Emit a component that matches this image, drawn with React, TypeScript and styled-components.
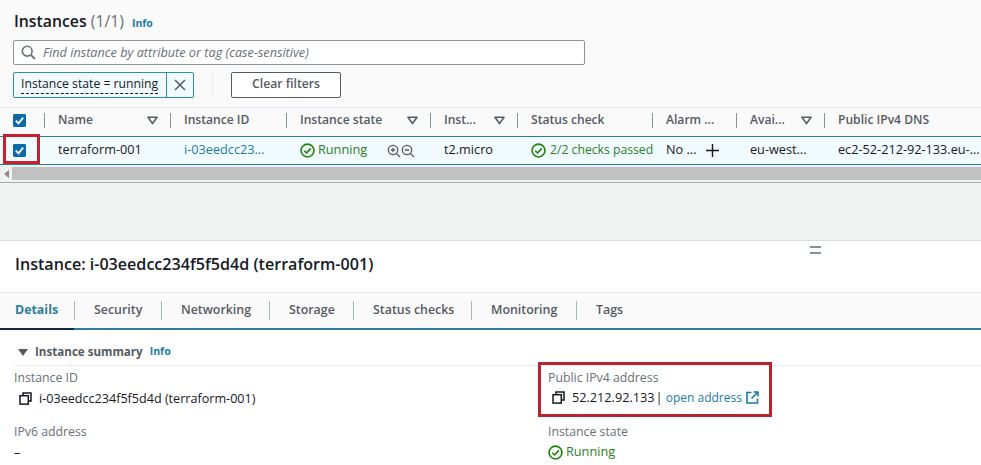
import React from "react";
import styled, { createGlobalStyle } from "styled-components";

const Global = createGlobalStyle`
  html, body { margin: 0; padding: 0; background: #fff; }
  * { box-sizing: border-box; }
  body { font-family: "Open Sans", "Noto Sans", sans-serif; color: #16191f; }
`;

const Page = styled.div`
  width: 981px;
  height: 465px;
  overflow: hidden;
  display: flex;
  flex-direction: column;
  background: #fff;
`;

const TopPanel = styled.section`
  height: 241px;
  flex: none;
  background: #f2f3f3;
  border-bottom: 1px solid #d5dbdb;
`;

const ListHead = styled.div`
  height: 108px;
  background: #fafafa;
  border-bottom: 1px solid #eaeded;
  padding: 11px 0 0 14px;
`;

const TitleRow = styled.div`
  display: flex;
  align-items: baseline;
  gap: 8px;
  height: 29px;
`;

const Title = styled.h1`
  margin: 0;
  font-size: 15.8px;
  font-weight: 600;
  line-height: 20px;
  color: #16191f;
`;

const Count = styled.span`
  font-weight: 400;
  color: #687078;
`;

const InfoLink = styled.a`
  font-size: 10.5px;
  font-weight: 700;
  color: #1a7aa8;
`;

const Search = styled.div`
  width: 572px;
  height: 25px;
  margin-left: -1px;
  background: #fff;
  border: 1px solid #8d9596;
  border-radius: 2px;
  display: flex;
  align-items: center;
  gap: 7px;
  padding: 0 0 1px 7px;
  font-size: 12.7px;
  font-style: italic;
  color: #687078;
`;

const FilterRow = styled.div`
  display: flex;
  align-items: stretch;
  height: 26px;
  margin: 7px 0 0 -1px;
`;

const Token = styled.div`
  width: 181px;
  display: flex;
  background: #f1faff;
  border: 1px solid #2b8fa8;
  border-radius: 2px;
`;

const TokenLabel = styled.span`
  flex: 1;
  padding-left: 7px;
  font-size: 12.2px;
  line-height: 22px;
  color: #16191f;
  white-space: nowrap;
  overflow: hidden;

  & > span {
    border-bottom: 1px dashed #16191f;
    padding-bottom: 1px;
  }
`;

const TokenClose = styled.span`
  width: 27px;
  flex: none;
  display: flex;
  align-items: center;
  justify-content: center;
  border-left: 1px solid #2b8fa8;
  color: #545b64;
`;

const FilterDivider = styled.span`
  width: 1px;
  margin: 0 18px 0 18px;
  background: #eaeded;
`;

const ClearButton = styled.div`
  width: 110px;
  background: #fff;
  border: 1px solid #545b64;
  border-radius: 2px;
  text-align: center;
  font-size: 12.2px;
  font-weight: 600;
  line-height: 22px;
  color: #545b64;
`;

const columns = "44px 126px 116px 144px 87px 135px 84px 88px 157px";

const HeadRow = styled.div`
  display: grid;
  grid-template-columns: ${columns};
  height: 28px;
  background: #fafafa;
`;

const HeadCell = styled.div<{ $first?: boolean }>`
  position: relative;
  display: flex;
  align-items: center;
  justify-content: space-between;
  padding: 0 ${(p) => (p.$first ? "0" : "12px")} 3px ${(p) => (p.$first ? "13px" : "14px")};
  font-size: 12.1px;
  font-weight: 600;
  color: #545b64;
  white-space: nowrap;

  &::before {
    content: "";
    display: ${(p) => (p.$first ? "none" : "block")};
    position: absolute;
    left: 0;
    top: 5px;
    bottom: 8px;
    width: 1px;
    background: #879596;
  }
`;

const HeadLabel = styled.span`
  margin-bottom: 2px;
`;

const DataRow = styled.div`
  display: grid;
  grid-template-columns: ${columns};
  height: 29px;
  background: #f1faff;
  border-top: 1px solid #2a7d9c;
  border-bottom: 1px solid #2a7d9c;
`;

const DataCell = styled.div`
  position: relative;
  display: flex;
  align-items: center;
  padding-left: 14px;
  font-size: 12.7px;
  color: #16191f;
  white-space: nowrap;
`;

const CheckCell = styled(DataCell)`
  padding-left: 13px;
`;

const RedFrame = styled.span`
  position: absolute;
  left: 3px;
  top: -3px;
  width: 37px;
  height: 30px;
  border: 3px solid #c8202d;
`;

const LinkText = styled.span`
  color: #1a7aa8;
  margin-bottom: 4px;
`;

const Plain = styled.span`
  margin-bottom: 4px;
`;

const Success = styled.span<{ $gap?: number; $size?: number }>`
  display: inline-flex;
  align-items: center;
  gap: ${(p) => p.$gap ?? 3}px;
  font-size: ${(p) => p.$size ?? 12.7}px;
  color: #2b7f1e;

  & > span {
    margin-bottom: 3px;
  }
`;

const ZoomIcons = styled.span`
  display: inline-flex;
  margin-left: 20px;
  color: #545b64;
`;

const AlarmPlus = styled.span`
  display: inline-flex;
  margin-left: 10px;
  color: #16191f;
`;

const ScrollTrack = styled.div`
  height: 18px;
  background: #f1f1f1;
  border-bottom: 1px solid #a9a9a9;
  display: flex;
  align-items: flex-start;
  padding-top: 2px;
`;

const ScrollArrow = styled.span`
  width: 12px;
  height: 13px;
  flex: none;
  display: flex;
  align-items: center;
  justify-content: center;
  color: #8a8a8a;
  font-size: 0;
`;

const ScrollThumb = styled.span`
  flex: 1;
  height: 13px;
  background: #c1c1c1;
`;

const DragHandle = styled.div`
  position: relative;
  height: 0;
  flex: none;

  &::after {
    content: "";
    box-sizing: border-box;
    position: absolute;
    left: 810px;
    top: 5px;
    width: 11px;
    height: 8px;
    border-top: 2px solid #8a9090;
    border-bottom: 2px solid #8a9090;
  }
`;

const DetailTitle = styled.h2`
  margin: 0;
  height: 51px;
  flex: none;
  padding: 13px 0 0 15px;
  font-size: 16.1px;
  font-weight: 600;
  line-height: 20px;
  color: #16191f;
`;

const TabBar = styled.nav`
  height: 38px;
  flex: none;
  display: flex;
  background: #fafafa;
  border-top: 1px solid #eaeded;
  border-bottom: 2px solid #2a7d9c;
  position: relative;
`;

const Tab = styled.div<{ $active?: boolean; $w: number }>`
  position: relative;
  width: ${(p) => p.$w}px;
  flex: none;
  margin-bottom: -2px;
  padding: 8px 0 0 ${(p) => (p.$active ? "15px" : "20px")};
  font-size: 12.4px;
  font-weight: ${(p) => (p.$active ? 700 : 600)};
  color: ${(p) => (p.$active ? "#2a7d9c" : "#545b64")};
  border-bottom: 2px solid ${(p) => (p.$active ? "#0e2a3c" : "transparent")};
  white-space: nowrap;

  &:not(:first-child)::before {
    content: "";
    position: absolute;
    left: 0;
    top: 8px;
    height: 19px;
    width: 1px;
    background: #aab7b8;
  }
`;

const SummaryHead = styled.div`
  height: 36px;
  flex: none;
  margin: 0 0 0 14px;
  padding: 12px 0 0 4px;
  display: flex;
  align-items: flex-start;
  gap: 7px;
  border-bottom: 1px solid #eaeded;
`;

const SummaryTitle = styled.span`
  font-size: 11.6px;
  font-weight: 700;
  line-height: 21px;
  color: #545b64;
  margin-top: -1px;
`;

const SummaryInfo = styled(InfoLink)`
  line-height: 21px;
  margin-top: -1px;
`;

const Caret = styled.span`
  margin-top: 7px;
  width: 0;
  height: 0;
  border-left: 5px solid transparent;
  border-right: 5px solid transparent;
  border-top: 7px solid #545b64;
`;

const Fields = styled.div`
  display: grid;
  flex: none;
  grid-template-columns: 524px 234px;
  margin-left: 14px;
`;

const FieldColumn = styled.div`
  display: flex;
  flex-direction: column;
`;

const Field = styled.div`
  height: 54px;
  flex: none;
  padding-top: 3px;
`;

const FramedField = styled(Field)`
  margin-top: -4px;
  height: 55px;
  padding: 4px 0 0 7px;
  border: 3px solid #b82330;
`;

const LastField = styled(Field)`
  padding: 6px 0 0 10px;
`;

const FieldLabel = styled.div`
  font-size: 12.3px;
  line-height: 18px;
  color: #687078;
`;

const FieldValue = styled.div`
  display: flex;
  align-items: center;
  height: 20px;
  margin-top: 1px;
  font-size: 12.6px;
  color: #16191f;
  white-space: nowrap;
`;

const FramedValue = styled(FieldValue)`
  margin-top: 0;
`;

const CopyWrap = styled.span`
  display: inline-flex;
  margin: 0 7px 0 5px;
`;

const FramedCopyWrap = styled(CopyWrap)`
  margin: 0 7px 0 4px;
`;

const IpText = styled.span`
  font-size: 12.7px;
`;

const Separator = styled.span`
  margin: 0 3px 0 1px;
  font-size: 13px;
`;

const AddressLink = styled.span`
  display: inline-flex;
  align-items: center;
  gap: 4px;
  font-size: 12px;
  color: #1a7aa8;
`;

const Checkbox = () => (
  <svg width="13" height="13" viewBox="0 0 14 14">
    <rect width="14" height="14" rx="1.5" fill="#0a6ba8" />
    <path d="M3 7.2 5.9 10 11 4" fill="none" stroke="#fff" strokeWidth="2" />
  </svg>
);

const SortCaret = () => (
  <svg width="11" height="9" viewBox="0 0 11 9">
    <path d="M1 1.2h9L5.5 7.6z" fill="none" stroke="#545b64" strokeWidth="1.6" strokeLinejoin="round" />
  </svg>
);

const CheckCircle = () => (
  <svg width="15" height="15" viewBox="0 0 14 14">
    <circle cx="7" cy="7" r="6" fill="none" stroke="#1d8102" strokeWidth="1.5" />
    <path d="M4 7.2 6.2 9.3 10 5" fill="none" stroke="#1d8102" strokeWidth="1.5" />
  </svg>
);

const Copy = () => (
  <svg width="13" height="13" viewBox="0 0 13 13">
    <path d="M4 3.5V1h8v8H9.5" fill="none" stroke="#16191f" strokeWidth="1.5" />
    <rect x="1" y="3.7" width="8.3" height="8.4" fill="none" stroke="#16191f" strokeWidth="1.5" />
  </svg>
);

const External = () => (
  <svg width="13" height="13" viewBox="0 0 13 13">
    <path d="M5.5 1.5H1v10.5h10.5V7.5M7.5 1h4.5v4.5M12 1 5.5 7.5" fill="none" stroke="#1a7aa8" strokeWidth="1.6" />
  </svg>
);

const ZoomGlyph = ({ plus }: { plus?: boolean }) => (
  <svg width="14" height="14" viewBox="0 0 14 14">
    <circle cx="6" cy="6" r="4.7" fill="none" stroke="currentColor" strokeWidth="1.3" />
    <path d="M9.5 9.5 13 13M3.8 6h4.4" fill="none" stroke="currentColor" strokeWidth="1.3" />
    {plus && <path d="M6 3.8v4.4" fill="none" stroke="currentColor" strokeWidth="1.3" />}
  </svg>
);

export default function App() {
  return (
    <Page>
      <Global />
      <TopPanel>
        <ListHead>
          <TitleRow>
            <Title>
              Instances <Count>(1/1)</Count>
            </Title>
            <InfoLink>Info</InfoLink>
          </TitleRow>
          <Search>
            <svg width="15" height="15" viewBox="0 0 15 15">
              <circle cx="6.2" cy="6.2" r="4.9" fill="none" stroke="#687078" strokeWidth="1.6" />
              <path d="M9.8 9.8 14 14" stroke="#687078" strokeWidth="1.8" />
            </svg>
            Find instance by attribute or tag (case-sensitive)
          </Search>
          <FilterRow>
            <Token>
              <TokenLabel>
                <span>Instance state = running</span>
              </TokenLabel>
              <TokenClose>
                <svg width="12" height="12" viewBox="0 0 12 12">
                  <path d="M1 1l10 10M11 1 1 11" stroke="currentColor" strokeWidth="1.5" />
                </svg>
              </TokenClose>
            </Token>
            <FilterDivider />
            <ClearButton>Clear filters</ClearButton>
          </FilterRow>
        </ListHead>
        <HeadRow>
          <HeadCell $first>
            <Checkbox />
          </HeadCell>
          <HeadCell><HeadLabel>Name</HeadLabel><SortCaret /></HeadCell>
          <HeadCell><HeadLabel>Instance ID</HeadLabel></HeadCell>
          <HeadCell><HeadLabel>Instance state</HeadLabel><SortCaret /></HeadCell>
          <HeadCell><HeadLabel>Inst...</HeadLabel><SortCaret /></HeadCell>
          <HeadCell><HeadLabel>Status check</HeadLabel></HeadCell>
          <HeadCell><HeadLabel>Alarm ...</HeadLabel></HeadCell>
          <HeadCell><HeadLabel>Avai...</HeadLabel><SortCaret /></HeadCell>
          <HeadCell><HeadLabel>Public IPv4 DNS</HeadLabel></HeadCell>
        </HeadRow>
        <DataRow>
          <CheckCell>
            <Checkbox />
            <RedFrame />
          </CheckCell>
          <DataCell><Plain>terraform-001</Plain></DataCell>
          <DataCell><LinkText>i-03eedcc23...</LinkText></DataCell>
          <DataCell>
            <Success><CheckCircle /><span>Running</span></Success>
            <ZoomIcons>
              <ZoomGlyph plus />
              <ZoomGlyph />
            </ZoomIcons>
          </DataCell>
          <DataCell><Plain>t2.micro</Plain></DataCell>
          <DataCell>
            <Success $gap={4} $size={12.2}><CheckCircle /><span>2/2 checks passed</span></Success>
          </DataCell>
          <DataCell>
            <Plain>No ...</Plain>
            <AlarmPlus>
              <svg width="13" height="13" viewBox="0 0 13 13">
                <path d="M6.5 0v13M0 6.5h13" stroke="currentColor" strokeWidth="1.4" />
              </svg>
            </AlarmPlus>
          </DataCell>
          <DataCell><Plain>eu-west...</Plain></DataCell>
          <DataCell><Plain>ec2-52-212-92-133.eu-...</Plain></DataCell>
        </DataRow>
        <ScrollTrack>
          <ScrollArrow>
            <svg width="5" height="8" viewBox="0 0 5 8">
              <path d="M5 0v8L0 4z" fill="#8a8a8a" />
            </svg>
          </ScrollArrow>
          <ScrollThumb />
        </ScrollTrack>
      </TopPanel>
      <DragHandle />
      <DetailTitle>Instance: i-03eedcc234f5f5d4d (terraform-001)</DetailTitle>
      <TabBar>
        <Tab $active $w={74}>Details</Tab>
        <Tab $w={87}>Security</Tab>
        <Tab $w={108}>Networking</Tab>
        <Tab $w={84}>Storage</Tab>
        <Tab $w={118}>Status checks</Tab>
        <Tab $w={105}>Monitoring</Tab>
        <Tab $w={60}>Tags</Tab>
      </TabBar>
      <SummaryHead>
        <Caret />
        <SummaryTitle>Instance summary</SummaryTitle>
        <SummaryInfo>Info</SummaryInfo>
      </SummaryHead>
      <Fields>
        <FieldColumn>
          <Field>
            <FieldLabel>Instance ID</FieldLabel>
            <FieldValue>
              <CopyWrap><Copy /></CopyWrap>
              i-03eedcc234f5f5d4d (terraform-001)
            </FieldValue>
          </Field>
          <Field>
            <FieldLabel>IPv6 address</FieldLabel>
            <FieldValue>–</FieldValue>
          </Field>
        </FieldColumn>
        <FieldColumn>
          <FramedField>
            <FieldLabel>Public IPv4 address</FieldLabel>
            <FramedValue>
              <FramedCopyWrap><Copy /></FramedCopyWrap>
              <IpText>52.212.92.133</IpText>
              <Separator>|</Separator>
              <AddressLink>open address <External /></AddressLink>
            </FramedValue>
          </FramedField>
          <LastField>
            <FieldLabel>Instance state</FieldLabel>
            <FieldValue>
              <Success><CheckCircle /><span>Running</span></Success>
            </FieldValue>
          </LastField>
        </FieldColumn>
      </Fields>
    </Page>
  );
}
